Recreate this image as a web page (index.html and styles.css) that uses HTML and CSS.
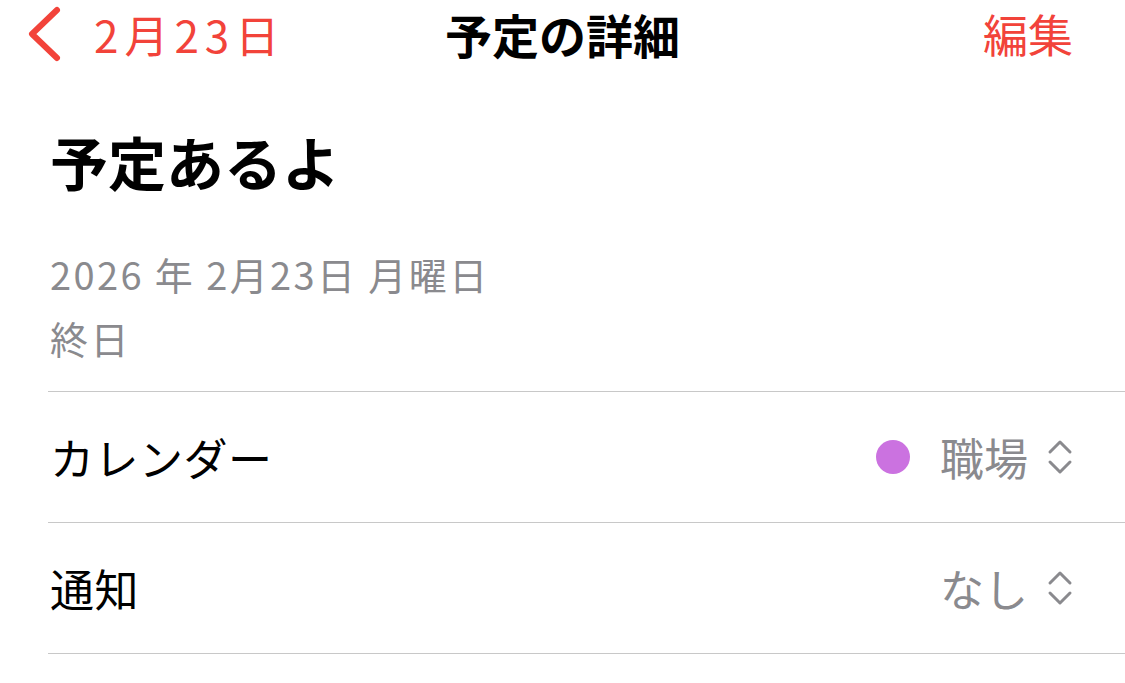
FILE: index.html
```html
<!DOCTYPE html>
<html lang="ja">
<head>
  <meta charset="UTF-8">
  <meta name="viewport" content="width=device-width, initial-scale=1.0">
  <title>予定の詳細</title>
  <link rel="stylesheet" href="styles.css">
</head>
<body>
  <header class="nav">
    <a class="nav-back" href="#">
      <svg class="back-icon" width="40" height="60" viewBox="0 0 40 60">
        <polyline points="31,6 6,30 31,54" fill="none" stroke="currentColor" stroke-width="6" stroke-linecap="round" stroke-linejoin="round"/>
      </svg>
      <span>2月23日</span>
    </a>
    <div class="nav-title">予定の詳細</div>
    <a class="nav-edit" href="#">編集</a>
  </header>

  <main class="detail">
    <section class="summary">
      <h1 class="event-title">予定あるよ</h1>
      <div class="event-date">2026 年 2月23日 月曜日</div>
      <div class="event-date">終日</div>
    </section>

    <div class="row">
      <span class="row-label">カレンダー</span>
      <span class="row-value">
        <span class="cal-dot"></span>
        <span>職場</span>
        <svg class="updown" width="26" height="36" viewBox="0 0 26 36">
          <polyline points="3,13 13,3 23,13" fill="none" stroke="currentColor" stroke-width="3" stroke-linecap="round" stroke-linejoin="round"/>
          <polyline points="3,23 13,33 23,23" fill="none" stroke="currentColor" stroke-width="3" stroke-linecap="round" stroke-linejoin="round"/>
        </svg>
      </span>
    </div>

    <div class="row">
      <span class="row-label">通知</span>
      <span class="row-value">
        <span>なし</span>
        <svg class="updown" width="26" height="36" viewBox="0 0 26 36">
          <polyline points="3,13 13,3 23,13" fill="none" stroke="currentColor" stroke-width="3" stroke-linecap="round" stroke-linejoin="round"/>
          <polyline points="3,23 13,33 23,23" fill="none" stroke="currentColor" stroke-width="3" stroke-linecap="round" stroke-linejoin="round"/>
        </svg>
      </span>
    </div>
  </main>
</body>
</html>
```

FILE: styles.css
```css
body {
  margin: 0;
  background: #ffffff;
  color: #000000;
  font-family: "Noto Sans CJK JP", "Noto Sans", sans-serif;
  overflow: hidden;
}

.nav {
  display: grid;
  grid-template-columns: 1fr auto 1fr;
  align-items: center;
  height: 68px;
  padding: 0 52px;
  font-size: 44px;
  line-height: 60px;
}

.nav a {
  color: #f2433a;
  text-decoration: none;
}

.nav-back {
  display: flex;
  align-items: center;
  gap: 28px;
  letter-spacing: 6px;
}

.back-icon {
  display: block;
  margin-left: -26px;
}

.nav-title {
  font-weight: 700;
  font-size: 47px;
}

.nav-edit {
  justify-self: end;
  font-size: 45px;
}

.detail {
  padding-left: 48px;
}

.summary {
  padding: 58px 0 21px 2px;
  border-bottom: 1px solid #c8c8c8;
}

.event-title {
  margin: 0 0 46px;
  font-size: 58px;
  line-height: 70px;
  font-weight: 700;
}

.event-date {
  font-size: 38px;
  line-height: 64px;
  letter-spacing: 2.4px;
  color: #8a8a8e;
}

.row {
  display: flex;
  align-items: center;
  justify-content: space-between;
  height: 130px;
  padding: 0 52px 0 2px;
  border-bottom: 1px solid #c8c8c8;
  font-size: 44px;
}

.row-label {
  letter-spacing: 0.5px;
}

.row-value {
  display: flex;
  align-items: center;
  color: #8a8a8e;
}

.cal-dot {
  width: 34px;
  height: 34px;
  border-radius: 50%;
  background: #cb72e0;
  margin-right: 30px;
}

.updown {
  display: block;
  margin-left: 19px;
}
```
